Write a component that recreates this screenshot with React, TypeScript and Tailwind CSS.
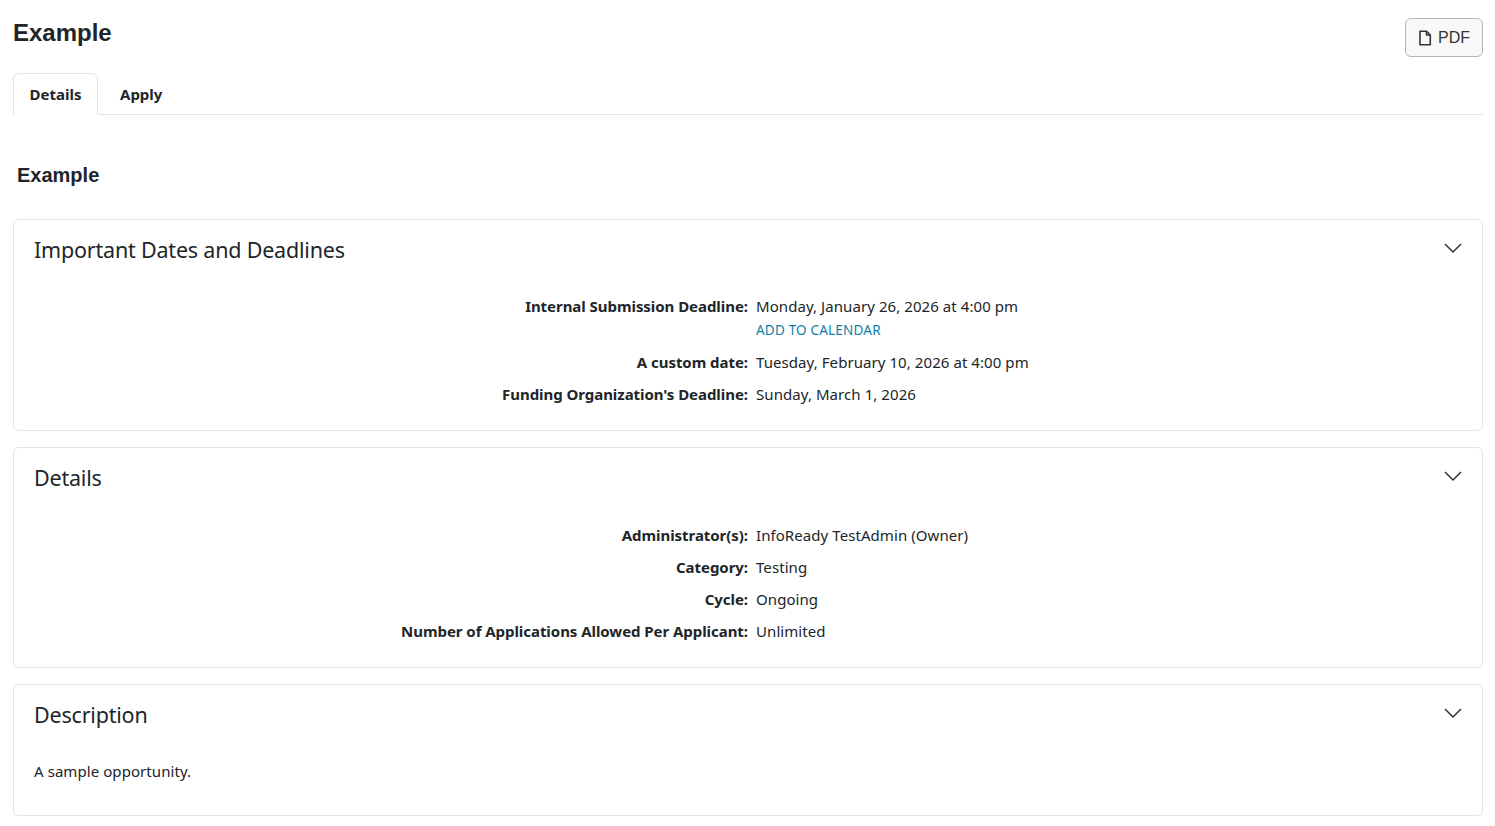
const body = { fontFamily: '"Noto Sans", "Open Sans", sans-serif' };

function Row({ label, children }: { label: string; children: React.ReactNode }) {
  return (
    <div className="flex mb-2">
      <div className="w-1/2 text-right font-bold text-[15px] leading-6 text-[#212529] tracking-[-0.05px]">{label}</div>
      <div className="w-1/2 pl-2 text-[15px] leading-6 text-[#212529] tracking-[0.07px]">{children}</div>
    </div>
  );
}

function Card({ title, className, children }: { title: string; className: string; children: React.ReactNode }) {
  return (
    <section className={`border border-[#e3e3ec] rounded-md mb-4 ${className}`}>
      <div className="flex justify-between items-start pl-5 pr-[20px] pt-[14px]">
        <h3 className="text-[21.5px] leading-8 text-[#212529] tracking-[-0.2px]">{title}</h3>
        <svg width="18" height="11" viewBox="0 0 18 11" fill="none" stroke="#333" strokeWidth="1.5" className="mt-[9px]">
          <path d="M1 1l8 8 8-8" />
        </svg>
      </div>
      {children}
    </section>
  );
}

export default function App() {
  return (
    <div className="bg-white min-h-screen pl-[13px] pr-[12px] pt-[18px] overflow-hidden" style={body}>
      <div className="flex justify-between items-start">
        <h1 className="font-bold text-[24px] leading-[30px] text-[#212529]" style={{ fontFamily: '"Liberation Sans", sans-serif' }}>Example</h1>
        <button className="flex items-center gap-1.5 h-[39px] w-[78px] justify-center border border-[#b5b5b5] rounded-md bg-[#f8f8f8] text-[#333] text-[16px]" style={{ fontFamily: '"Liberation Sans", sans-serif' }}>
          <svg width="14" height="16" viewBox="0 0 14 16" fill="none" stroke="#333" strokeWidth="1.6" strokeLinejoin="round">
            <path d="M2 1.2h6.5L12.3 5v9.8H2z" />
            <path d="M8.5 1.2V5h3.8" />
          </svg>
          PDF
        </button>
      </div>

      <div className="flex border-b border-[#e3e3ec] mt-[16px] h-[42px] font-bold text-[15px] text-[#212529]">
        <div className="w-[85px] h-[42px] border border-b-white border-[#e3e3ec] rounded-t-md flex items-center justify-center">Details</div>
        <div className="pl-[22px] pt-[1px] flex items-center">Apply</div>
      </div>

      <h2 className="font-bold text-[20px] leading-[28px] text-[#212529] ml-1 mt-[46px] mb-[30px]" style={{ fontFamily: '"Liberation Sans", sans-serif' }}>Example</h2>

      <Card title="Important Dates and Deadlines" className="h-[212px]">
        <div className="mt-[28px]">
          <Row label="Internal Submission Deadline:">Monday, January 26, 2026 at 4:00 pm<div className="text-[13.5px] leading-6 text-[#0d7fa5] tracking-[0.2px]">ADD TO CALENDAR</div></Row>
          <Row label="A custom date:">Tuesday, February 10, 2026 at 4:00 pm</Row>
          <Row label="Funding Organization's Deadline:">Sunday, March 1, 2026</Row>
        </div>
      </Card>
      <Card title="Details" className="h-[221px]">
        <div className="mt-[29px]">
          <Row label="Administrator(s):">InfoReady TestAdmin (Owner)</Row>
          <Row label="Category:">Testing</Row>
          <Row label="Cycle:">Ongoing</Row>
          <Row label="Number of Applications Allowed Per Applicant:">Unlimited</Row>
        </div>
      </Card>
      <Card title="Description" className="h-[132px]">
        <p className="px-5 mt-[28px] text-[15px] leading-6 text-[#212529] tracking-[0.07px]">A sample opportunity.</p>
      </Card>
    </div>
  );
}
